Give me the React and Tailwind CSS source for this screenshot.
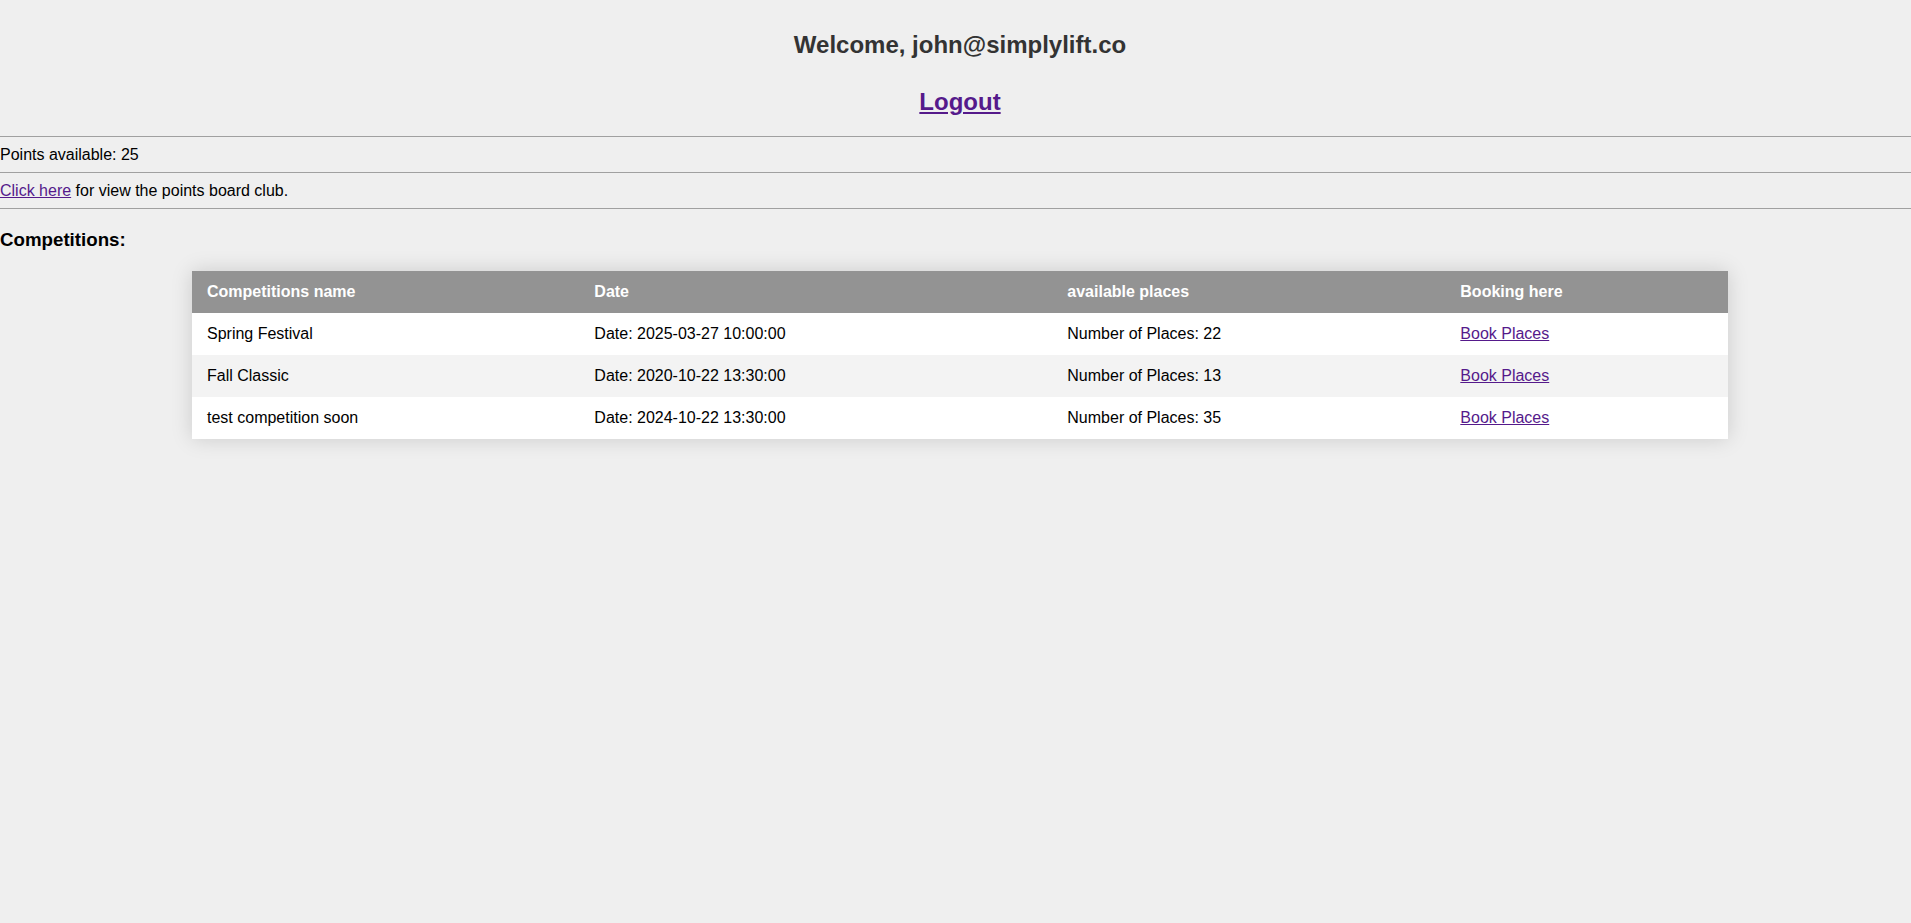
const competitions = [
    { name: "Spring Festival", date: "2025-03-27 10:00:00", places: 22 },
    { name: "Fall Classic", date: "2020-10-22 13:30:00", places: 13 },
    { name: "test competition soon", date: "2024-10-22 13:30:00", places: 35 },
];

function App() {

    return (

        <div className="min-h-[923px] w-full overflow-hidden bg-[#efefef] text-black" style={{ fontFamily: '"Liberation Sans", Arial, sans-serif' }}>

            <div className="w-[1920px] pt-[31px] pb-10">

                <h2 className="text-center text-[24px] leading-[27px] font-bold text-[#333333]">
                    Welcome, john@simplylift.co
                </h2>

                <h2 className="mt-[30px] text-center text-[24px] leading-[27px] font-bold">
                    <a href="#" className="text-[#551a8b] underline">Logout</a>
                </h2>

                <hr className="mt-[21px] border-0 border-t border-[#a0a0a0]" />

                <p className="my-[8px] text-[16px] leading-[19px]">
                    Points available: 25
                </p>

                <hr className="border-0 border-t border-[#a0a0a0]" />

                <p className="my-[8px] text-[16px] leading-[19px]">
                    <a href="#" className="text-[#551a8b] underline">Click here</a> for view the points board club.
                </p>

                <hr className="border-0 border-t border-[#a0a0a0]" />

                <h3 className="mt-[20px] text-[18.72px] leading-[21px] font-bold">
                    Competitions:
                </h3>

                <table className="mx-auto mt-[21px] w-[80%] border-collapse text-left text-[16px] leading-[18px] shadow-[0_0_20px_rgba(0,0,0,0.15)]">
                    <thead>
                        <tr className="bg-[#939393] text-white">
                            <th className="px-[15px] py-3 font-bold">Competitions name</th>
                            <th className="px-[15px] py-3 font-bold">Date</th>
                            <th className="px-[15px] py-3 font-bold">available places</th>
                            <th className="px-[15px] py-3 font-bold">Booking here</th>
                        </tr>
                    </thead>
                    <tbody>
                        {competitions.map((c, i) => (
                            <tr key={c.name} className={i % 2 === 1 ? "bg-[#f3f3f3]" : "bg-white"}>
                                <td className="px-[15px] py-3">{c.name}</td>
                                <td className="px-[15px] py-3">Date: {c.date}</td>
                                <td className="px-[15px] py-3">Number of Places: {c.places}</td>
                                <td className="px-[15px] py-3">
                                    <a href="#" className="text-[#551a8b] underline">Book Places</a>
                                </td>
                            </tr>
                        ))}
                    </tbody>
                </table>

            </div>

        </div>
    );
}

export default App;
